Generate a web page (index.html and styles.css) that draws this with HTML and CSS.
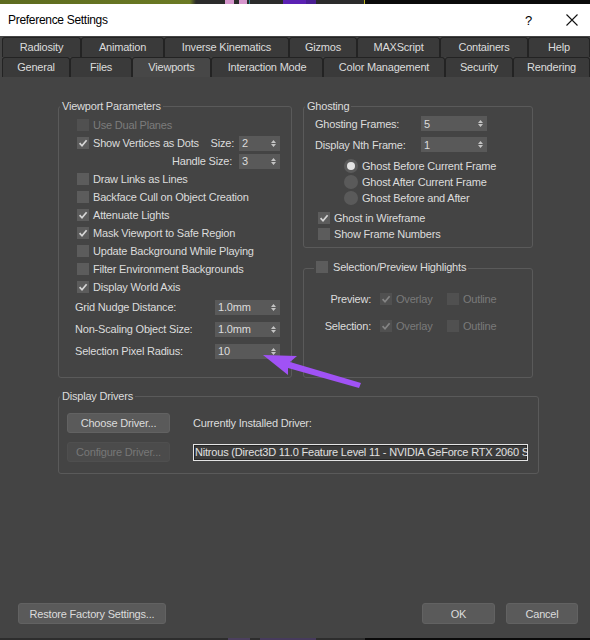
FILE: index.html
```html
<!DOCTYPE html>
<html lang="en">
<head>
    <meta charset="UTF-8">
    <title>Preference Settings</title>
    <link rel="stylesheet" href="styles.css">
</head>
<body>
    <div class="desk-top"></div>

    <div class="titlebar">
        <span class="title">Preference Settings</span>
        <span class="help">?</span>
        <span class="close">
            <svg width="14" height="14" viewBox="0 0 14 14"><path d="M1.5 1.5 L12.5 12.5 M12.5 1.5 L1.5 12.5" stroke="#111" stroke-width="1.1" fill="none"/></svg>
        </span>
    </div>

    <div class="tabs">
        <div class="tab-row row1">
            <div class="tab">Radiosity</div>
            <div class="tab">Animation</div>
            <div class="tab">Inverse Kinematics</div>
            <div class="tab">Gizmos</div>
            <div class="tab">MAXScript</div>
            <div class="tab">Containers</div>
            <div class="tab">Help</div>
        </div>
        <div class="tab-row row2">
            <div class="tab">General</div>
            <div class="tab">Files</div>
            <div class="tab active">Viewports</div>
            <div class="tab">Interaction Mode</div>
            <div class="tab">Color Management</div>
            <div class="tab">Security</div>
            <div class="tab">Rendering</div>
        </div>
    </div>

    <div class="panel">
        <div class="content">
            <div class="columns">
                <!-- left column -->
                <fieldset class="group vp">
                    <legend>Viewport Parameters</legend>
                    <div class="vp-body">
                        <div class="row dis"><span class="cb dis"></span>Use Dual Planes</div>
                        <div class="row">
                            <span class="cb"><svg viewBox="0 0 12 12"><path d="M2.6 6.2 L5 8.8 L9.6 3.2"/></svg></span>Show Vertices as Dots
                            <span class="size-label">Size:</span>
                            <span class="spinner small">2<svg class="arr" viewBox="0 0 5 9"><path d="M0 4 L2.5 1 L5 4 Z M0 5 L2.5 8 L5 5 Z"/></svg></span>
                        </div>
                        <div class="row right">
                            <span class="handle-label">Handle Size:</span>
                            <span class="spinner small">3<svg class="arr" viewBox="0 0 5 9"><path d="M0 4 L2.5 1 L5 4 Z M0 5 L2.5 8 L5 5 Z"/></svg></span>
                        </div>
                        <div class="row"><span class="cb"></span>Draw Links as Lines</div>
                        <div class="row"><span class="cb"></span>Backface Cull on Object Creation</div>
                        <div class="row"><span class="cb"><svg viewBox="0 0 12 12"><path d="M2.6 6.2 L5 8.8 L9.6 3.2"/></svg></span>Attenuate Lights</div>
                        <div class="row"><span class="cb"><svg viewBox="0 0 12 12"><path d="M2.6 6.2 L5 8.8 L9.6 3.2"/></svg></span>Mask Viewport to Safe Region</div>
                        <div class="row"><span class="cb"></span>Update Background While Playing</div>
                        <div class="row"><span class="cb"></span>Filter Environment Backgrounds</div>
                        <div class="row"><span class="cb"><svg viewBox="0 0 12 12"><path d="M2.6 6.2 L5 8.8 L9.6 3.2"/></svg></span>Display World Axis</div>
                        <div class="row spin">
                            <span>Grid Nudge Distance:</span>
                            <span class="spinner wide">1.0mm<svg class="arr" viewBox="0 0 5 9"><path d="M0 4 L2.5 1 L5 4 Z M0 5 L2.5 8 L5 5 Z"/></svg></span>
                        </div>
                        <div class="row spin">
                            <span>Non-Scaling Object Size:</span>
                            <span class="spinner wide">1.0mm<svg class="arr" viewBox="0 0 5 9"><path d="M0 4 L2.5 1 L5 4 Z M0 5 L2.5 8 L5 5 Z"/></svg></span>
                        </div>
                        <div class="row spin">
                            <span>Selection Pixel Radius:</span>
                            <span class="spinner wide">10<svg class="arr" viewBox="0 0 5 9"><path d="M0 4 L2.5 1 L5 4 Z M0 5 L2.5 8 L5 5 Z"/></svg></span>
                        </div>
                    </div>
                </fieldset>

                <!-- right column -->
                <div class="right-col">
                    <fieldset class="group ghost">
                        <legend>Ghosting</legend>
                        <div class="ghost-body">
                            <div class="grow">
                                <span class="glabel">Ghosting Frames:</span>
                                <span class="spinner ghost-spin">5<svg class="arr" viewBox="0 0 5 9"><path d="M0 4 L2.5 1 L5 4 Z M0 5 L2.5 8 L5 5 Z"/></svg></span>
                            </div>
                            <div class="grow">
                                <span class="glabel">Display Nth Frame:</span>
                                <span class="spinner ghost-spin">1<svg class="arr" viewBox="0 0 5 9"><path d="M0 4 L2.5 1 L5 4 Z M0 5 L2.5 8 L5 5 Z"/></svg></span>
                            </div>
                            <div class="radios">
                                <div class="rrow"><span class="rd on"></span>Ghost Before Current Frame</div>
                                <div class="rrow"><span class="rd"></span>Ghost After Current Frame</div>
                                <div class="rrow"><span class="rd"></span>Ghost Before and After</div>
                            </div>
                            <div class="checks">
                                <div class="rrow"><span class="cb"><svg viewBox="0 0 12 12"><path d="M2.6 6.2 L5 8.8 L9.6 3.2"/></svg></span>Ghost in Wireframe</div>
                                <div class="rrow"><span class="cb"></span>Show Frame Numbers</div>
                            </div>
                        </div>
                    </fieldset>

                    <fieldset class="group sel">
                        <legend><span class="lg"><span class="cb"></span>Selection/Preview Highlights</span></legend>
                        <div class="sel-body">
                            <div class="srow">
                                <span class="slabel">Preview:</span>
                                <span class="opt"><span class="cb dis"><svg viewBox="0 0 12 12"><path d="M2.6 6.2 L5 8.8 L9.6 3.2"/></svg></span>Overlay</span>
                                <span class="opt"><span class="cb dis"></span>Outline</span>
                            </div>
                            <div class="srow">
                                <span class="slabel">Selection:</span>
                                <span class="opt"><span class="cb dis"><svg viewBox="0 0 12 12"><path d="M2.6 6.2 L5 8.8 L9.6 3.2"/></svg></span>Overlay</span>
                                <span class="opt"><span class="cb dis"></span>Outline</span>
                            </div>
                        </div>
                    </fieldset>
                </div>
            </div>

            <fieldset class="group drivers">
                <legend>Display Drivers</legend>
                <div class="drv-body">
                    <div class="btn">Choose Driver...</div>
                    <div class="drv-label">Currently Installed Driver:</div>
                    <div class="btn disabled">Configure Driver...</div>
                    <div class="drv-field">Nitrous (Direct3D 11.0 Feature Level 11 - NVIDIA GeForce RTX 2060 SUPER)</div>
                </div>
            </fieldset>
        </div>

        <div class="footer">
            <div class="btn restore">Restore Factory Settings...</div>
            <div class="spacer"></div>
            <div class="btn ok">OK</div>
            <div class="btn cancel">Cancel</div>
        </div>
    </div>

    <div class="desk-bottom"></div>

    <svg class="pointer" width="590" height="640" viewBox="0 0 590 640">
        <path d="M263 355 L297 356 L290 362 L361 383 L359 388 L288 368 L288 375 Z" fill="#a052f5"/>
    </svg>
</body>
</html>
```

FILE: styles.css
```css
* {
    box-sizing: border-box;
}

html, body {
    margin: 0;
    padding: 0;
}

body {
    width: 590px;
    height: 640px;
    overflow: hidden;
    position: relative;
    font-family: "Liberation Sans", Arial, sans-serif;
    font-size: 11px;
    letter-spacing: -0.2px;
    color: #dcdcdc;
    background: #444;
}

/* bits of desktop around the window */
.desk-top {
    height: 4px;
    background: linear-gradient(to right,
        #5d6b1f 0, #6b7a24 190px, #2b2b2b 196px, #2b2b2b 225px,
        #d596cc 225px, #d596cc 234px, #2b2b2b 234px, #2b2b2b 239px,
        #d596cc 239px, #d596cc 247px, #2b2b2b 247px, #2b2b2b 249px,
        #2c8c8c 249px, #2c8c8c 250px, #2b2b2b 250px, #2b2b2b 283px,
        #5b21b3 283px, #5b21b3 306px, #4a1f92 306px, #4a1f92 316px,
        #2b2b2b 316px, #2b2b2b 364px, #b8b020 364px, #b8b020 365px,
        #0a0a0a 365px);
}

.desk-bottom {
    height: 2px;
    background: linear-gradient(to right,
        #2d2d2d 0, #2d2d2d 228px, #4b3f5e 228px, #4b3f5e 250px,
        #2d2d2d 250px, #2d2d2d 260px, #463a5c 260px, #463a5c 316px,
        #2d2d2d 316px, #2d2d2d 365px, #0a0a0a 365px);
}

/* title bar */
.titlebar {
    height: 32px;
    background: #fff;
    color: #000;
    display: flex;
    align-items: center;
    padding-left: 8px;
    font-size: 12px;
    letter-spacing: -0.3px;
}

.title {
    flex: 1;
}

.help {
    width: 7px;
    margin-right: 33px;
    font-size: 13px;
}

.close {
    width: 14px;
    height: 14px;
    margin-right: 11px;
    display: flex;
}

/* tabs */
.tabs {
    padding-top: 1px;
    background: #444;
}

.tab-row {
    display: grid;
    height: 20px;
    padding-left: 2px;
}

.row1 {
    grid-template-columns: 79px 83px 125px 68px 83px 88px 62px;
}

.row2 {
    grid-template-columns: 68px 62px 79px 112px 122px 68px 77px;
}

.tab {
    background: #3a3a3a;
    border: 1px solid #232323;
    border-bottom: none;
    border-radius: 3px 3px 0 0;
    text-align: center;
    line-height: 19px;
    color: #dcdcdc;
}

.tab.active {
    background: #474747;
}

/* main panel */
.panel {
    height: 561px;
    display: flex;
    flex-direction: column;
}

.content {
    padding: 22px 0 0 58px;
}

.columns {
    display: grid;
    grid-template-columns: 234px 230px;
    column-gap: 11px;
}

.group {
    margin: 0;
    padding: 0;
    min-width: 0;
    border: 1px solid #5a5a5a;
    border-radius: 3px;
}

.group legend {
    padding: 0 2px;
    margin-left: 1px;
    line-height: 14px;
}

/* checkbox / radio / spinner */
.cb {
    width: 12px;
    height: 12px;
    flex: none;
    background: #5c5c5c;
    margin-right: 4px;
    display: inline-flex;
}

.cb svg {
    width: 12px;
    height: 12px;
    fill: none;
    stroke: #d6d6d6;
    stroke-width: 1.7;
}

.cb.dis {
    background: #505050;
}

.cb.dis svg {
    stroke: #858585;
}

.rd {
    width: 14px;
    height: 14px;
    border-radius: 50%;
    background: #5a5a5a;
    margin-right: 4px;
    display: inline-flex;
    align-items: center;
    justify-content: center;
    flex: none;
}

.rd.on::after {
    content: "";
    width: 8px;
    height: 8px;
    border-radius: 50%;
    background: #e2e2e2;
}

.spinner {
    height: 15px;
    background: #595959;
    display: flex;
    align-items: center;
    justify-content: space-between;
    padding: 0 4px 0 3px;
    color: #dcdcdc;
}

.spinner .arr {
    width: 5px;
    height: 9px;
    fill: #c4c4c4;
}

.spinner.small {
    width: 41px;
}

.spinner.wide {
    width: 65px;
}

/* viewport parameters */
.vp-body {
    padding: 3px 11px 14px 0;
}

.row {
    display: flex;
    align-items: center;
    height: 18px;
    padding-left: 18px;
}

.row.dis {
    color: #7c7c7c;
}

.row.right {
    justify-content: flex-end;
}

.size-label {
    margin-left: auto;
    margin-right: 5px;
}

.handle-label {
    margin-right: 7px;
}

.row.spin {
    height: 22px;
    padding-left: 16px;
    justify-content: space-between;
}

/* ghosting */
.right-col {
    display: flex;
    flex-direction: column;
}

.ghost-body {
    padding-bottom: 5px;
}

.grow {
    display: flex;
    align-items: center;
    height: 21px;
    padding-left: 11px;
}

.glabel {
    width: 106px;
}

.ghost-spin {
    width: 66px;
}

.radios {
    margin-top: 3px;
    padding-left: 40px;
}

.rrow {
    display: flex;
    align-items: center;
    height: 16px;
}

.checks {
    margin-top: 4px;
    padding-left: 14px;
}

/* selection highlights */
.sel {
    margin-top: 12px;
}

.sel legend {
    margin-left: 10px;
}

.lg {
    display: inline-flex;
    align-items: center;
}

.lg .cb {
    margin-right: 5px;
}

.sel-body {
    padding: 9px 0 38px 0;
}

.srow {
    display: flex;
    align-items: center;
    height: 27px;
}

.slabel {
    width: 67px;
    text-align: right;
    margin-right: 9px;
}

.opt {
    width: 67px;
    display: flex;
    align-items: center;
    color: #7a7a7a;
}

/* display drivers */
.drivers {
    margin-top: 11px;
    width: 481px;
}

.drv-body {
    display: grid;
    grid-template-columns: 103px 335px;
    column-gap: 23px;
    row-gap: 9px;
    align-items: center;
    padding: 10px 10px 11px 8px;
}

.drv-field {
    height: 17px;
    line-height: 15px;
    padding-left: 1px;
    border: 1px solid #e4e4e4;
    background: #3b3b3b;
    box-shadow: inset 0 0 0 1px #262626;
    white-space: nowrap;
    overflow: hidden;
    color: #e0e0e0;
}

/* buttons */
.btn {
    height: 20px;
    background: #5a5a5a;
    border: 1px solid #626262;
    border-radius: 3px;
    display: flex;
    align-items: center;
    justify-content: center;
    color: #dcdcdc;
}

.btn.disabled {
    background: #4b4b4b;
    border-color: #4f4f4f;
    color: #777;
}

.footer {
    margin-top: auto;
    display: flex;
    align-items: center;
    padding: 0 12px 14px 18px;
}

.footer .btn {
    height: 21px;
}

.spacer {
    flex: 1;
}

.restore {
    width: 148px;
}

.ok {
    width: 73px;
    margin-right: 11px;
}

.cancel {
    width: 72px;
}

/* annotation arrow drawn over the dialog */
.pointer {
    position: absolute;
    left: 0;
    top: 0;
    pointer-events: none;
}
```
